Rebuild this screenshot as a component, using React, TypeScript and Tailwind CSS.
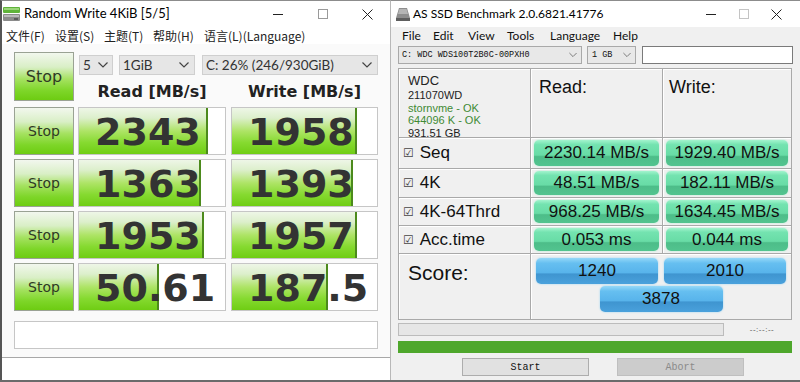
import React from "react";

const UI = { fontFamily: "Lato, 'Noto Sans CJK SC', sans-serif" };
const ARIAL = { fontFamily: "'Liberation Sans', Arial, sans-serif" };
const MONO = { fontFamily: "'Liberation Mono', monospace" };
const BOLD = { fontFamily: "'DejaVu Sans', Verdana, sans-serif" };

function Min({ c = "#222" }: { c?: string }) {
  return (
    <svg width="10" height="10" viewBox="0 0 10 10">
      <line x1="0" y1="5.5" x2="10" y2="5.5" stroke={c} strokeWidth="1" />
    </svg>
  );
}
function Max({ c = "#222" }: { c?: string }) {
  return (
    <svg width="10" height="10" viewBox="0 0 10 10">
      <rect x="0.5" y="0.5" width="9" height="9" fill="none" stroke={c} strokeWidth="1" />
    </svg>
  );
}
function Close({ c = "#222" }: { c?: string }) {
  return (
    <svg width="11" height="11" viewBox="0 0 11 11">
      <path d="M0.5 0.5L10.5 10.5M10.5 0.5L0.5 10.5" stroke={c} strokeWidth="1" />
    </svg>
  );
}
function Chevron({ c = "#444", w = 10 }: { c?: string; w?: number }) {
  return (
    <svg width={w} height="6" viewBox="0 0 10 6">
      <polyline points="0.5,0.5 5,5 9.5,0.5" fill="none" stroke={c} strokeWidth="1.2" />
    </svg>
  );
}

function CdmIcon() {
  return (
    <svg width="17" height="15" viewBox="0 0 17 15">
      <rect x="0" y="0" width="17" height="6" rx="1" fill="#5fb33a" />
      <rect x="1" y="1" width="15" height="2" fill="#9bd67a" />
      <rect x="0" y="7" width="17" height="7" rx="1" fill="#8b8b8b" />
      <rect x="1" y="8" width="15" height="2" fill="#b9b9b9" />
      <rect x="11" y="11" width="4" height="2" fill="#5a5a5a" />
    </svg>
  );
}
function AsIcon() {
  return (
    <svg width="14" height="13" viewBox="0 0 14 13">
      <polygon points="3,0 11,0 14,10 0,10" fill="#8e8e8e" />
      <polygon points="3.5,1 10.5,1 12,6 2,6" fill="#b5b5b5" />
      <rect x="0" y="10" width="14" height="3" fill="#5e5e5e" />
    </svg>
  );
}

const rows = [
  { read: "2343", write: "1958", rf: 129, wf: 125 },
  { read: "1363", write: "1393", rf: 122, wf: 121 },
  { read: "1953", write: "1957", rf: 125, wf: 125 },
  { read: "50.61", write: "187.5", rf: 80, wf: 96 },
];

function StopBtn({ big }: { big?: boolean }) {
  return (
    <div
      className={`w-[60px] ${big ? "h-[49px] text-[16px]" : "h-full text-[14px]"} flex items-center justify-center border border-[#9aa294] bg-[linear-gradient(to_bottom,#f2f7ee_0%,#d9efc6_30%,#a6e262_55%,#7ed629_80%,#6dcc12_100%)] text-[#2f3a25]`}
      style={BOLD}
    >
      Stop
    </div>
  );
}

function Bar({ value, fill, w }: { value: string; fill: number; w: number }) {
  return (
    <div className="relative h-full border border-[#c6c6c6] bg-white flex items-center" style={{ width: w }}>
      <div
        className="absolute left-0 top-0 bottom-0 border-r-2 border-[#4c8a1c] bg-[linear-gradient(to_bottom,#eef6e7_0%,#dcefcb_22%,#aee466_50%,#86da30_75%,#6fcd14_100%)]"
        style={{ width: fill }}
      />
      <span
        className="relative pl-[16px] text-[38px] font-bold leading-none text-[#333333] mt-[2px]"
        style={BOLD}
      >
        {value}
      </span>
    </div>
  );
}

function LeftWindow() {
  return (
    <div className="w-[390px] h-full flex flex-col border-l-2 border-l-[#555555] border-t border-t-[#8c8c8c] bg-white" style={UI}>
      <div className="h-[26px] flex items-center bg-white">
        <div className="ml-[1px] mt-[1px]"><CdmIcon /></div>
        <span className="ml-[4px] text-[13px] text-black">Random Write 4KiB [5/5]</span>
        <div className="ml-auto flex h-full">
          <div className="w-[45px] flex items-center justify-center"><Min /></div>
          <div className="w-[45px] flex items-center justify-center"><Max c="#9a9a9a" /></div>
          <div className="w-[45px] flex items-center justify-center"><Close /></div>
        </div>
      </div>
      <div className="h-[17px] flex items-center pl-[4px] text-[12px] text-[#222]" style={{ fontFamily: "'Noto Sans CJK SC', sans-serif" }}>
        <span className="w-[49px]">文件(F)</span>
        <span className="w-[49px]">设置(S)</span>
        <span className="w-[49px]">主题(T)</span>
        <span className="w-[51px]">帮助(H)</span>
        <span>语言(L)(Language)</span>
      </div>
      <div className="h-[314px] bg-[#fafafa] border-b border-[#a8a8a8] pl-[12px] pt-[8px] flex flex-col">
        <div className="flex gap-[4px]">
          <StopBtn big />
          <div className="flex flex-col w-[300px]">
            <div className="mt-[3px] h-[20px] flex text-[13.5px] text-[#333]">
              <div className="ml-[1px] w-[34px] h-full bg-[#e6e6e6] border border-[#cfcfcf] flex items-center pl-[3px] pr-[4px] justify-between">
                <span>5</span><Chevron />
              </div>
              <div className="ml-[6px] w-[76px] h-full bg-[#e6e6e6] border border-[#cfcfcf] flex items-center pl-[3px] pr-[5px] justify-between">
                <span>1GiB</span><Chevron />
              </div>
              <div className="ml-[7px] w-[176px] h-full bg-[#e6e6e6] border border-[#cfcfcf] flex items-center pl-[3px] pr-[5px] justify-between">
                <span>C: 26% (246/930GiB)</span><Chevron />
              </div>
            </div>
            <div className="mt-[7px] h-[20px] flex leading-[20px] text-[16px] font-bold text-[#222]" style={BOLD}>
              <div className="w-[148px] text-center">Read [MB/s]</div>
              <div className="ml-[5px] w-[147px] text-center">Write [MB/s]</div>
            </div>
          </div>
        </div>
        <div className="mt-[5px] flex flex-col gap-[4px]">
          {rows.map((r, i) => (
            <div key={i} className="h-[48px] flex">
              <StopBtn />
              <div className="ml-[4px] h-full"><Bar value={r.read} fill={r.rf} w={148} /></div>
              <div className="ml-[5px] h-full"><Bar value={r.write} fill={r.wf} w={147} /></div>
            </div>
          ))}
        </div>
        <div className="mt-[10px] h-[28px] w-[364px] border border-[#c6c6c6] bg-white" />
      </div>
      <div className="flex-1 bg-white" />
    </div>
  );
}

function GreenCell({ text }: { text: string }) {
  return (
    <div className="bg-[#f0f0f0] shadow-[inset_1px_1px_0_#ffffff] px-[3px] py-[2px]">
      <div className="h-full rounded-[5px] flex items-center justify-center text-[17px] text-[#111] bg-[linear-gradient(to_bottom,#a3f4ce_0%,#74e3b0_18%,#68dca6_58%,#4dbd89_64%,#52c48f_100%)] shadow-[0_0_2px_#a6eccd]">
        {text}
      </div>
    </div>
  );
}

function Label({ text }: { text: string }) {
  return (
    <div className="bg-[#f0f0f0] shadow-[inset_1px_1px_0_#ffffff] flex items-center pl-[4px] text-[17px] text-[#111]">
      <span className="text-[12px] text-[#444]" style={BOLD}>☑</span>
      <span className="ml-[6px]">{text}</span>
    </div>
  );
}

function BlueBtn({ text, cls }: { text: string; cls?: string }) {
  return (
    <div className={`h-[26px] rounded-[5px] flex items-center justify-center text-[17px] text-[#111] bg-[linear-gradient(to_bottom,#94d8f8_0%,#66bff0_20%,#58b4eb_56%,#3f95d0_62%,#4aa1dc_100%)] shadow-[0_0_2px_#8fd0f2] ${cls ?? ""}`}>
      {text}
    </div>
  );
}

function RightWindow() {
  return (
    <div className="w-[410px] h-full flex flex-col bg-[#f0f0f0] border-t border-t-[#8c8c8c] border-l border-l-[#b8b8b8]">
      <div className="h-[26px] flex items-center bg-white" style={UI}>
        <div className="ml-[5px]"><AsIcon /></div>
        <span className="ml-[3px] text-[12px] text-black">AS SSD Benchmark 2.0.6821.41776</span>
        <div className="ml-auto flex h-full pr-[7px]">
          <div className="w-[33px] flex items-center justify-center"><Min /></div>
          <div className="w-[33px] flex items-center justify-center"><Max c="#c4c4c4" /></div>
          <div className="w-[33px] flex items-center justify-center"><Close /></div>
        </div>
      </div>
      <div className="h-[17px] flex items-center pl-[11px] text-[12px] text-[#111]" style={UI}>
        <span className="w-[31px]">File</span>
        <span className="w-[35px]">Edit</span>
        <span className="w-[39px]">View</span>
        <span className="w-[43px]">Tools</span>
        <span className="w-[63px]">Language</span>
        <span>Help</span>
      </div>
      <div className="mt-[2px] h-[18px] flex pl-[7px] text-[8.5px] text-[#111]" style={MONO}>
        <div className="w-[184px] h-full bg-[#e8e8e8] border border-[#a9a9a9] flex items-center justify-between pl-[3px] pr-[4px]">
          <span>C: WDC WDS100T2B0C-00PXH0</span><Chevron c="#777" w={8} />
        </div>
        <div className="ml-[5px] w-[49px] h-full bg-[#e8e8e8] border border-[#a9a9a9] flex items-center justify-between pl-[4px] pr-[4px]">
          <span>1 GB</span><Chevron c="#777" w={8} />
        </div>
        <div className="ml-[6px] w-[151px] h-full bg-white border border-[#7a7a7a]" />
      </div>
      <div
        className="mt-[4px] ml-[7px] w-[394px] h-[252px] grid grid-cols-[131px_131px_128px] grid-rows-[68px_30px_28px_27px_27px_65px] gap-px p-px bg-[#a9a9a9]"
        style={ARIAL}
      >
        <div className="bg-[#f0f0f0] shadow-[inset_1px_1px_0_#ffffff] pl-[9px] pt-[4px] text-[11px] leading-[12.5px] text-[#222]">
          <div className="text-[13px] leading-[15px]">WDC</div>
          <div className="mt-[1px]">211070WD</div>
          <div className="text-[#3f8a34]">stornvme - OK</div>
          <div className="text-[#3f8a34]">644096 K - OK</div>
          <div>931.51 GB</div>
        </div>
        <div className="bg-[#f0f0f0] shadow-[inset_1px_1px_0_#ffffff] pl-[8px] pt-[5px] text-[18px] text-[#111]">Read:</div>
        <div className="bg-[#f0f0f0] shadow-[inset_1px_1px_0_#ffffff] pl-[6px] pt-[5px] text-[18px] text-[#111]">Write:</div>

        <Label text="Seq" />
        <GreenCell text="2230.14 MB/s" />
        <GreenCell text="1929.40 MB/s" />

        <Label text="4K" />
        <GreenCell text="48.51 MB/s" />
        <GreenCell text="182.11 MB/s" />

        <Label text="4K-64Thrd" />
        <GreenCell text="968.25 MB/s" />
        <GreenCell text="1634.45 MB/s" />

        <Label text="Acc.time" />
        <GreenCell text="0.053 ms" />
        <GreenCell text="0.044 ms" />

        <div className="bg-[#f0f0f0] shadow-[inset_1px_1px_0_#ffffff] pl-[9px] pt-[3px] text-[21px] text-[#111]">Score:</div>
        <div className="col-span-2 bg-[#f0f0f0] shadow-[inset_1px_1px_0_#ffffff] px-[5px] pt-[4px] flex flex-col">
          <div className="grid grid-cols-2 gap-[6px]">
            <BlueBtn text="1240" />
            <BlueBtn text="2010" />
          </div>
          <div className="mt-[2px] flex justify-center">
            <BlueBtn text="3878" cls="w-[123px]" />
          </div>
        </div>
      </div>
      <div className="mt-[3px] ml-[7px] h-[13px] flex items-center">
        <div className="w-[326px] h-full bg-[#e6e6e6] border border-[#bcbcbc]" />
        <div className="flex-1 text-center text-[8px] text-[#555] tracking-[0.5px]" style={ARIAL}>--:--:--</div>
      </div>
      <div className="mt-[5px] ml-[7px] w-[394px] h-[12px] bg-[#4ea72c]" />
      <div className="mt-[5px] h-[18px] flex text-[10px]" style={MONO}>
        <div className="ml-[71px] w-[127px] h-full bg-[#e1e1e1] border border-[#adadad] flex items-center justify-center text-[#111]">Start</div>
        <div className="ml-[28px] w-[127px] h-full bg-[#cccccc] border border-[#bfbfbf] flex items-center justify-center text-[#8a8a8a]">Abort</div>
      </div>
    </div>
  );
}

export default function App() {
  return (
    <div className="w-[800px] h-[382px] overflow-hidden bg-white flex border-b-2 border-[#6b6b6b]">
      <LeftWindow />
      <RightWindow />
    </div>
  );
}
